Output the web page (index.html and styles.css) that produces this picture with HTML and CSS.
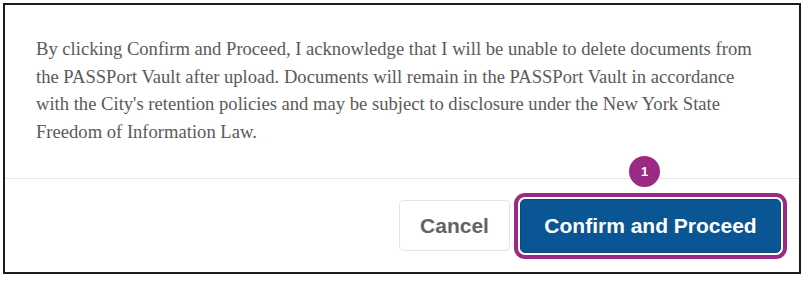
FILE: index.html
```html
<!DOCTYPE html>
<html lang="en">
<head>
  <meta charset="UTF-8" />
  <title>Confirm Upload</title>
  <link rel="stylesheet" href="styles.css">
</head>
<body>
  <div class="modal">
    <div class="modal-body">
      <p>By clicking Confirm and Proceed, I acknowledge that I will be unable to delete documents from the PASSPort Vault after upload. Documents will remain in the PASSPort Vault in accordance with the City's retention policies and may be subject to disclosure under the New York State Freedom of Information Law.</p>
    </div>
    <div class="modal-footer">
      <button class="btn cancel">Cancel</button>
      <span class="highlight">
        <span class="step">1</span>
        <button class="btn primary">Confirm and Proceed</button>
      </span>
    </div>
  </div>
</body>
</html>
```

FILE: styles.css
```css
* {
  box-sizing: border-box;
  margin: 0;
  padding: 0;
}

body {
  background-color: white;
  font-family: 'Liberation Sans', Arial, sans-serif;
}

.modal {
  margin: 3px;
  width: 798px;
  height: 271px;
  border: 2px solid #1c1c1c;
  background-color: white;
  display: flex;
  flex-direction: column;
}

.modal-body {
  padding: 30px 30px 33px 31px;
}

.modal-body p {
  font-family: 'Liberation Serif', 'Times New Roman', serif;
  font-size: 18.6px;
  line-height: 27.5px;
  color: #5a5a5a;
}

.modal-footer {
  flex: 1;
  border-top: 1px solid #e6e6ea;
  display: flex;
  justify-content: flex-end;
  align-items: center;
  padding-right: 12px;
}

.btn {
  font-family: 'Liberation Sans', Arial, sans-serif;
  font-size: 21px;
  font-weight: bold;
  border-radius: 5px;
  cursor: pointer;
}

.cancel {
  width: 111px;
  height: 51px;
  background-color: white;
  color: #636363;
  border: 1px solid #e4e4e4;
  border-radius: 4px;
}

.highlight {
  position: relative;
  margin-left: 4px;
  padding: 2px;
  border: 4px solid #9b2a85;
  border-radius: 11px;
  display: flex;
}

.primary {
  width: 261px;
  height: 54px;
  background-color: #0a5594;
  color: white;
  border: 1px solid #064a83;
}

.step {
  position: absolute;
  left: 111px;
  top: -41px;
  width: 31px;
  height: 31px;
  border-radius: 50%;
  background-color: #9b2a85;
  color: white;
  font-size: 13px;
  font-weight: bold;
  display: flex;
  align-items: center;
  justify-content: center;
}
```
